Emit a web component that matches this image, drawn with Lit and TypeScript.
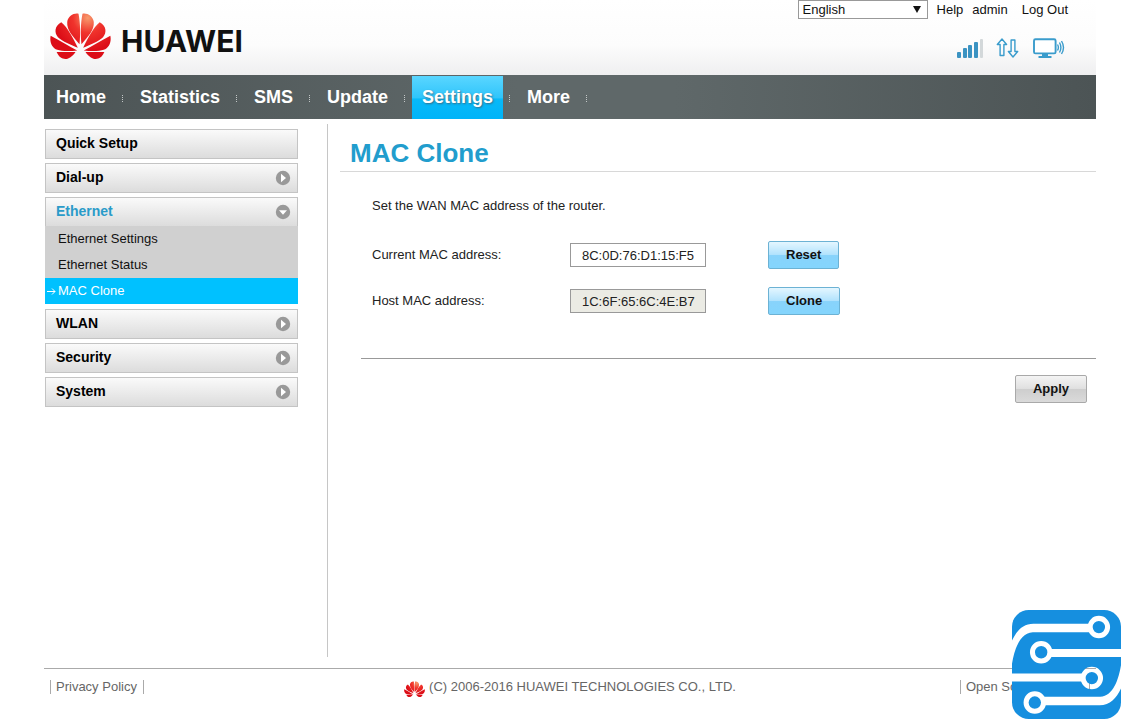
import { LitElement, html, css, svg, nothing } from "lit";
import { customElement, property, state } from "lit/decorators.js";
import { classMap } from "lit/directives/class-map.js";

const petals = svg`
  <path d="M119 133C100 110 80 92 82 66C84 48 102 38 116 41C122 70 122 106 119 133Z"/>
  <path d="M114 144C98 112 84 84 64 67C44 78 42 98 54 112C67 125 94 135 114 144Z"/>
  <path d="M112 152C86 140 60 122 32 108C28 126 36 144 52 150C66 155 94 154 112 152Z"/>
  <path d="M107 157L50 157C57 173 70 181 83 177C94 173 102 165 107 157Z"/>`;

@customElement("brand-flower")
export class BrandFlower extends LitElement {
  static styles = css`
    :host { display: block; }
    svg { display: block; width: 100%; height: auto; }
  `;

  render() {
    return html`<svg viewBox="30 36 184 144" aria-hidden="true">
      <defs>
        <radialGradient id="red" gradientUnits="userSpaceOnUse" cx="144" cy="54" r="100">
          <stop offset="0" stop-color="#f79a6c"></stop>
          <stop offset=".45" stop-color="#f0332c"></stop>
          <stop offset="1" stop-color="#dc0d17"></stop>
        </radialGradient>
      </defs>
      <g fill="url(#red)">
        <g>${petals}</g>
        <path d="M125 133C144 110 164 92 162 66C160 48 142 38 128 41C122 70 122 106 125 133Z"/>
        <path d="M130 144C146 112 160 84 180 67C200 78 202 98 190 112C177 125 150 135 130 144Z"/>
        <path d="M132 152C158 140 184 122 212 108C216 126 208 144 192 150C178 155 150 154 132 152Z"/>
        <path d="M137 157L194 157C187 173 174 181 161 177C150 173 142 165 137 157Z"/>
      </g>
    </svg>`;
  }
}

@customElement("circuit-badge")
export class CircuitBadge extends LitElement {
  static styles = css`
    :host { display: block; }
    svg { display: block; width: 100%; height: auto; }
  `;

  render() {
    return html`<svg viewBox="218 30 325 325" aria-hidden="true">
      <defs>
        <mask id="traces" maskUnits="userSpaceOnUse" x="218" y="30" width="325" height="325">
          <rect x="218" y="30" width="325" height="325" fill="#fff"></rect>
          <path d="M450 71H282C250 71 232 92 218 121V190C225 150 240 98 280 96H450Z"/>
          <path d="M311 314H479C511 314 529 293 543 264V195C536 235 521 287 481 289H311Z"/>
          <path d="M330 146H543V170H330ZM218 219H430V243H218Z"/>
          <g fill="#fff" stroke="#000" stroke-width="15">
            <circle cx="477" cy="81" r="26"/>
            <circle cx="305" cy="156" r="26"/>
            <circle cx="456" cy="233" r="26"/>
            <circle cx="286" cy="306" r="26"/>
          </g>
        </mask>
      </defs>
      <rect x="218" y="30" width="325" height="325" rx="50" fill="#168fdf" mask="url(#traces)"></rect>
    </svg>`;
  }
}

interface MenuEntry {
  label: string;
  children?: string[];
  expandable?: boolean;
}

@customElement("side-menu")
export class SideMenu extends LitElement {
  @property({ attribute: false }) entries: MenuEntry[] = [];
  @property() open = "";
  @property() current = "";

  static styles = css`
    :host { display: block; }
    ul { list-style: none; margin: 0; padding: 0; }
    .menu { display: flex; flex-direction: column; gap: 4px; }
    .head {
      display: flex;
      align-items: center;
      justify-content: space-between;
      box-sizing: border-box;
      width: 100%;
      height: 30px;
      padding: 0 6px 0 10px;
      border: 1px solid #c4c4c4;
      background: linear-gradient(#fafafa, #dcdcdc);
      font: bold 14px/24px "Liberation Sans", Arial, sans-serif;
      color: #000;
      text-align: left;
      cursor: pointer;
    }
    .head span { padding-bottom: 2px; }
    .head.open { height: 29px; border-bottom: 0; color: #2a9bc9; }
    .head svg { width: 16px; height: 16px; }
    .sub { margin-bottom: 1px; background: #d0d0d0; }
    .sub a {
      display: flex;
      align-items: center;
      height: 26px;
      padding-left: 13px;
      font-size: 13px;
      color: #111;
      text-decoration: none;
    }
    .sub a.current { padding-left: 2px; gap: 2px; background: #00c1ff; color: #fff; }
    .sub svg { width: 9px; height: 9px; }
  `;

  private toggle(entry: MenuEntry) {
    if (entry.children) this.open = this.open === entry.label ? "" : entry.label;
  }

  render() {
    return html`<ul class="menu">
      ${this.entries.map((e) => {
        const open = e.label === this.open;
        return html`<li>
          <button class=${classMap({ head: true, open })} @click=${() => this.toggle(e)}>
            <span>${e.label}</span>
            ${e.expandable
              ? html`<svg viewBox="0 0 16 16" aria-hidden="true">
                  <circle cx="8" cy="8" r="7.2" fill="#999"></circle>
                  <path d=${open ? "M4 6.2H12L8 10.8Z" : "M6 3.8V12.2L11 8Z"} fill="#fff"></path>
                </svg>`
              : nothing}
          </button>
          ${open && e.children
            ? html`<ul class="sub">
                ${e.children.map((c) => {
                  const current = c === this.current;
                  return html`<li><a href="#" class=${classMap({ current })}>${current
                    ? html`<svg viewBox="0 0 9 9" fill="none" stroke="#fff" aria-hidden="true"><path d="M0 4.5H8M5 1.5L8 4.5L5 7.5"/></svg>`
                    : nothing}<span>${c}</span></a></li>`;
                })}
              </ul>`
            : nothing}
        </li>`;
      })}
    </ul>`;
  }
}

@customElement("app-root")
export class AppRoot extends LitElement {
  @state() private mac = "8C:0D:76:D1:15:F5";
  private readonly hostMac = "1C:6F:65:6C:4E:B7";
  private readonly tabs = ["Home", "Statistics", "SMS", "Update", "Settings", "More"];
  private readonly entries: MenuEntry[] = [
    { label: "Quick Setup" },
    { label: "Dial-up", expandable: true },
    { label: "Ethernet", expandable: true, children: ["Ethernet Settings", "Ethernet Status", "MAC Clone"] },
    { label: "WLAN", expandable: true },
    { label: "Security", expandable: true },
    { label: "System", expandable: true },
  ];

  static styles = css`
    :host {
      display: flex;
      flex-direction: column;
      box-sizing: border-box;
      position: relative;
      min-height: 100vh;
      padding: 0 44px;
      background: #fff;
      font: 13px/18px "Liberation Sans", Arial, sans-serif;
      color: #222;
    }
    a { color: inherit; text-decoration: none; }

    .top {
      display: flex;
      justify-content: space-between;
      height: 75px;
      background: linear-gradient(#fff, #fcfcfc 60%, #efeff0);
    }
    .brand { display: flex; align-items: center; gap: 10px; padding: 0 0 3px 6px; }
    .brand brand-flower { width: 61px; }
    .brand span { padding-top: 10px; font: bold 30px/28px Inter, "Liberation Sans", sans-serif; color: #111; }
    .tools { display: flex; flex-direction: column; align-items: flex-end; gap: 18px; padding-right: 28px; }
    .links { display: flex; align-items: center; color: #111; }
    .links a { margin-left: 9px; }
    .links a:last-child { margin-left: 14px; }
    .pick { display: grid; align-items: center; width: 130px; }
    .pick select, .pick svg { grid-area: 1 / 1; }
    .pick select {
      appearance: none;
      width: 100%;
      height: 19px;
      padding: 0 4px;
      border: 1px solid #999;
      border-radius: 0;
      background: #fff;
      font: inherit;
      color: #111;
    }
    .pick svg { justify-self: end; width: 8px; height: 7px; margin-right: 7px; pointer-events: none; }
    .status { display: flex; align-items: center; gap: 13px; padding-right: 3px; }
    .status svg { display: block; height: 22px; }
    .bars { width: 28px; }
    .arrows { width: 23px; }
    .screen { width: 33px; }

    .nav {
      display: flex;
      align-items: stretch;
      height: 44px;
      padding-left: 2px;
      background: linear-gradient(90deg, #4c5455, #5f6869 45%, #5f6869 60%, #4c5455);
    }
    .nav a {
      padding: 0 10px;
      font: bold 18px/44px "Liberation Sans", Arial, sans-serif;
      color: #fff;
    }
    .nav a.on {
      margin-top: 1px;
      line-height: 42px;
      background: linear-gradient(#5ad6ff, #30c5fb 50%, #08b9f8 54%, #00b4f8);
      text-shadow: 1px 1px 2px #35708a;
    }
    .nav i { align-self: center; width: 1px; height: 7px; margin: 2px 7px 0 6px; background: repeating-linear-gradient(#c4c8c8 0 1px, transparent 1px 2px); }

    .body { display: flex; flex: 1; padding: 5px 0 11px; }
    .side { box-sizing: border-box; width: 284px; padding: 5px 29px 0 1px; border-right: 1px solid #c6c6c6; }
    .main { flex: 1; padding-left: 12px; }
    h1 {
      margin: 0;
      padding: 13px 0 1px 10px;
      border-bottom: 1px solid #d8d8d8;
      font: bold 26px/33px "Liberation Sans", Arial, sans-serif;
      color: #219dcd;
    }
    .panel { margin-left: 21px; padding: 25px 0 43px 11px; border-bottom: 1px solid #999; }
    .panel p { margin: 0 0 26px; }
    .row { display: grid; grid-template-columns: 198px 136px auto; justify-content: start; align-items: center; height: 28px; }
    .row + .row { margin-top: 18px; }
    .row input {
      box-sizing: border-box;
      width: 136px;
      height: 24px;
      padding: 0 4px 0 11px;
      border: 1px solid #999;
      background: #fff;
      font: inherit;
      color: #222;
    }
    .row input[readonly] { background: #ebebe4; }
    .btn {
      height: 28px;
      padding: 0 17px;
      border: 1px solid #6cb2d4;
      border-radius: 2px;
      background: linear-gradient(#e4f6ff, #b2e3fd 48%, #88d3fb 52%, #84d5fd);
      font: bold 13px/26px "Liberation Sans", Arial, sans-serif;
      color: #111;
      cursor: pointer;
    }
    .row .btn { justify-self: start; margin-left: 62px; }
    .actions { display: flex; justify-content: flex-end; padding: 16px 9px 0 0; }
    .btn.plain { border-color: #a9a9a9; background: linear-gradient(#f4f4f4, #e0e0e0 48%, #cecece 52%, #dadada); }

    .foot {
      display: grid;
      grid-template-columns: 1fr auto 1fr;
      align-items: start;
      height: 47px;
      padding: 10px 6px 0;
      border-top: 1px solid #aaa;
      color: #666;
    }
    .foot a { justify-self: start; margin-top: 1px; padding: 0 6px 0 5px; border: solid #aaa; border-width: 0 1px; line-height: 14px; }
    .foot a:last-child { justify-self: end; }
    .copy { display: flex; align-items: flex-start; gap: 4px; line-height: 16px; }
    .copy brand-flower { width: 21px; padding-top: 2px; }
    .badge { position: absolute; right: 19px; bottom: 7px; width: 109px; pointer-events: none; }
  `;

  render() {
    return html`
      <header class="top">
        <div class="brand"><brand-flower></brand-flower><span>HUAWEI</span></div>
        <div class="tools">
          <div class="links">
            <div class="pick">
              <select aria-label="Language"><option>English</option></select>
              <svg viewBox="0 0 8 7" aria-hidden="true"><path d="M0 0H8L4 7Z" fill="#111"/></svg>
            </div>
            <a href="#">Help</a><a href="#">admin</a><a href="#">Log Out</a>
          </div>
          <div class="status">
            <svg class="bars" viewBox="0 0 28 22" aria-label="Signal strength">
              <g fill="#3b93c2">
                <rect x="2" y="15" width="4" height="6" rx="1"/>
                <rect x="8" y="11" width="4" height="10" rx="1"/>
                <rect x="13" y="8" width="4" height="13" rx="1"/>
                <rect x="19" y="5" width="4" height="16" rx="1"/>
              </g>
              <rect x="25" y="2" width="3" height="19" rx="1" fill="#d3d8da"/>
            </svg>
            <svg class="arrows" viewBox="0 0 23 22" fill="none" stroke="#3a9ccc" stroke-width="1.4" stroke-linejoin="round" aria-label="Data transfer">
              <path d="M6 2L10.6 7.5H7.9V18.5H4.1V7.5H1.3Z"/>
              <path d="M17 20L12.4 14.5H15.1V3H18.9V14.5H21.7Z"/>
            </svg>
            <svg class="screen" viewBox="0 0 33 22" fill="none" stroke="#3a9ccc" aria-label="Connected devices">
              <rect x="2" y="2.2" width="21.6" height="14.2" rx="1.5" stroke-width="1.9" fill="#fff"/>
              <path d="M10.5 17H15.5V19H10.5Z" fill="#3a9ccc"/>
              <path d="M6.5 20H19.5" stroke-width="2"/>
              <path d="M25.5 7.5Q27.3 10.5 25.5 13.5M27.5 5.5Q30.3 10.5 27.5 15.5M29.5 4Q33.5 10.5 29.5 17" stroke-width="1.4"/>
            </svg>
          </div>
        </div>
      </header>
      <nav class="nav">
        ${this.tabs.map((t) => html`<a href="#" class=${classMap({ on: t === "Settings" })}>${t}</a><i></i>`)}
      </nav>
      <div class="body">
        <aside class="side">
          <side-menu .entries=${this.entries} open="Ethernet" current="MAC Clone"></side-menu>
        </aside>
        <main class="main">
          <h1>MAC Clone</h1>
          <section class="panel">
            <p>Set the WAN MAC address of the router.</p>
            <div class="row">
              <label for="current">Current MAC address:</label>
              <input id="current" .value=${this.mac} />
              <button class="btn" @click=${() => (this.mac = "8C:0D:76:D1:15:F5")}>Reset</button>
            </div>
            <div class="row">
              <label for="host">Host MAC address:</label>
              <input id="host" readonly .value=${this.hostMac} />
              <button class="btn" @click=${() => (this.mac = this.hostMac)}>Clone</button>
            </div>
          </section>
          <div class="actions"><button class="btn plain">Apply</button></div>
        </main>
      </div>
      <footer class="foot">
        <a href="#">Privacy Policy</a>
        <span class="copy"><brand-flower></brand-flower>(C) 2006-2016 HUAWEI TECHNOLOGIES CO., LTD.</span>
        <a href="#">Open Source Notice</a>
      </footer>
      <circuit-badge class="badge"></circuit-badge>
    `;
  }
}
